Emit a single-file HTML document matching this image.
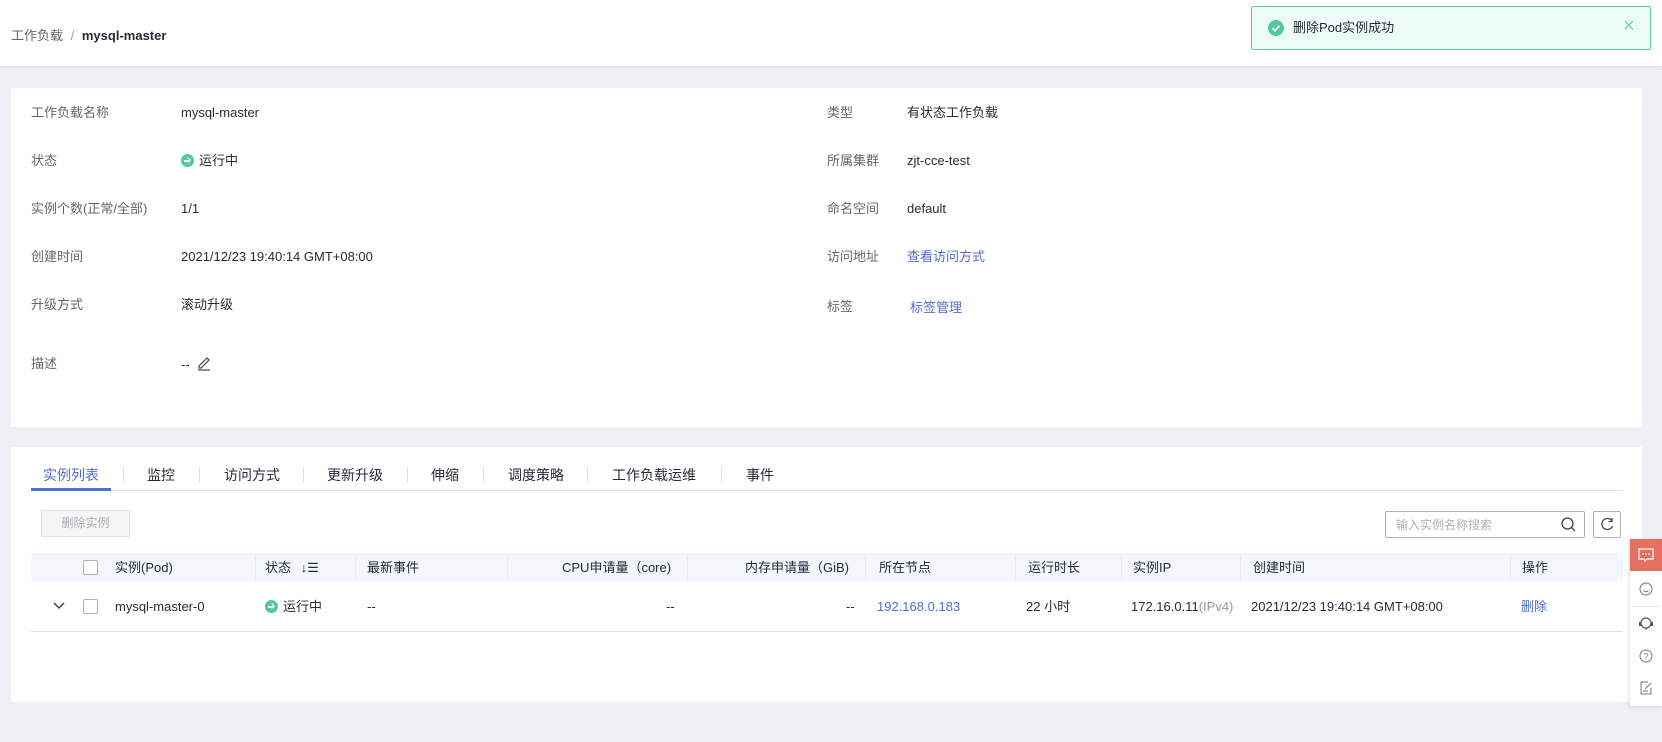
<!DOCTYPE html>
<html><head><meta charset="utf-8"><style>
*{margin:0;padding:0;box-sizing:border-box}
body{width:1662px;height:742px;background:#eef0f5;font-family:"Liberation Sans","Noto Sans CJK SC",sans-serif;font-size:13px;color:#252b3a;position:relative;overflow:hidden}
.a{position:absolute;white-space:nowrap;line-height:18px}
.hdr{position:absolute;left:0;top:0;width:1662px;height:66px;background:#fff;box-shadow:0 2px 4px rgba(0,0,0,.05)}
.card{position:absolute;left:11px;width:1631px;background:#fff}
.lbl{color:#666}
.link{color:#526ecc}
.ok{display:inline-block;width:13px;height:13px;border-radius:50%;background:#50c8a0;vertical-align:-2px;margin-right:5px;position:relative}
.ok:after{content:"";position:absolute;left:3px;top:6px;width:6px;height:1.5px;background:#fff}
.ok:before{content:"";position:absolute;left:5px;top:4px;width:3px;height:3px;border-top:1.5px solid #fff;border-right:1.5px solid #fff;transform:rotate(45deg)}
.sep{position:absolute;top:467px;width:1px;height:16px;background:#dfe1e6}
.th{position:absolute;top:553px;height:29px;background:#f3f6fb;left:31px;width:1592px}
.cs{position:absolute;top:555px;width:1px;height:25px;background:#e8ebf0}
.cb{position:absolute;width:15px;height:15px;border:1px solid #adb0b8;border-radius:2px;background:#fff}
</style></head><body>
<div class="hdr"></div>
<div class="a" style="left:11px;top:27px;color:#666">工作负载 <span style="color:#999;margin:0 4px">/</span> <b style="color:#252b3a">mysql-master</b></div>
<div class="a" style="left:1251px;top:6px;width:400px;height:44px;border:1px solid #5ccba6;background:#edfbf6;border-radius:2px"></div>
<svg class="a" style="left:1268px;top:20px" width="16" height="16" viewBox="0 0 16 16"><circle cx="8" cy="8" r="8" fill="#50c8a0"/><path d="M4.5 8.2 L7 10.7 L11.5 5.8" fill="none" stroke="#fff" stroke-width="1.8"/></svg>
<div class="a" style="left:1293px;top:19px;color:#252b3a">删除Pod实例成功</div>
<div class="a" style="left:1623px;top:17px;color:#7fd1b8;font-size:20px">×</div>

<div class="card" style="top:88px;height:339px"></div>
<div class="a lbl" style="left:31px;top:104px">工作负载名称</div><div class="a" style="left:181px;top:104px">mysql-master</div>
<div class="a lbl" style="left:31px;top:152px">状态</div><div class="a" style="left:181px;top:152px"><span class="ok"></span>运行中</div>
<div class="a lbl" style="left:31px;top:200px">实例个数(正常/全部)</div><div class="a" style="left:181px;top:200px">1/1</div>
<div class="a lbl" style="left:31px;top:248px">创建时间</div><div class="a" style="left:181px;top:248px">2021/12/23 19:40:14 GMT+08:00</div>
<div class="a lbl" style="left:31px;top:296px">升级方式</div><div class="a" style="left:181px;top:296px">滚动升级</div>
<div class="a lbl" style="left:31px;top:355px">描述</div><div class="a" style="left:181px;top:356px">--</div>
<svg class="a" style="left:196px;top:355px" width="16" height="16" viewBox="0 0 16 16"><path d="M3 11 L11 3 L13 5 L5 13 L3 13 Z" fill="none" stroke="#444" stroke-width="1.2"/><path d="M2 15 H14" stroke="#444" stroke-width="1.2"/></svg>
<div class="a lbl" style="left:827px;top:104px">类型</div><div class="a" style="left:907px;top:104px">有状态工作负载</div>
<div class="a lbl" style="left:827px;top:152px">所属集群</div><div class="a" style="left:907px;top:152px">zjt-cce-test</div>
<div class="a lbl" style="left:827px;top:200px">命名空间</div><div class="a" style="left:907px;top:200px">default</div>
<div class="a lbl" style="left:827px;top:248px">访问地址</div><div class="a link" style="left:907px;top:248px">查看访问方式</div>
<div class="a lbl" style="left:827px;top:298px">标签</div><div class="a link" style="left:910px;top:299px">标签管理</div>

<div class="card" style="top:447px;height:255px"></div>
<div class="a" style="left:31px;top:490px;width:1592px;height:1px;background:#dfe1e6"></div>
<div class="a" style="left:31px;top:488px;width:80px;height:3px;background:#526ecc"></div>
<div class="a" style="left:43px;top:466px;font-size:14px;color:#526ecc">实例列表</div>
<div class="sep" style="left:123px"></div>
<div class="a" style="left:147px;top:466px;font-size:14px">监控</div>
<div class="sep" style="left:199px"></div>
<div class="a" style="left:224px;top:466px;font-size:14px">访问方式</div>
<div class="sep" style="left:303px"></div>
<div class="a" style="left:327px;top:466px;font-size:14px">更新升级</div>
<div class="sep" style="left:407px"></div>
<div class="a" style="left:431px;top:466px;font-size:14px">伸缩</div>
<div class="sep" style="left:483px"></div>
<div class="a" style="left:508px;top:466px;font-size:14px">调度策略</div>
<div class="sep" style="left:587px"></div>
<div class="a" style="left:612px;top:466px;font-size:14px">工作负载运维</div>
<div class="sep" style="left:721px"></div>
<div class="a" style="left:746px;top:466px;font-size:14px">事件</div>

<div class="a" style="left:41px;top:510px;width:89px;height:27px;border:1px solid #dfe1e6;background:#f5f5f6;border-radius:2px;color:#adb0b8;font-size:12px;text-align:center;line-height:25px">删除实例</div>
<div class="a" style="left:1385px;top:511px;width:200px;height:27px;border:1px solid #adb0b8;border-radius:2px"></div>
<div class="a" style="left:1396px;top:516px;color:#adb0b8;font-size:12px">输入实例名称搜索</div>
<svg class="a" style="left:1560px;top:516px" width="17" height="17" viewBox="0 0 17 17"><circle cx="7.5" cy="7.5" r="5.5" fill="none" stroke="#444" stroke-width="1.3"/><path d="M11.5 11.5 L15 15" stroke="#444" stroke-width="1.3"/></svg>
<div class="a" style="left:1593px;top:511px;width:28px;height:27px;border:1px solid #adb0b8;border-radius:2px"></div>
<svg class="a" style="left:1599px;top:516px" width="16" height="16" viewBox="0 0 16 16"><path d="M13 5 A5.5 5.5 0 1 0 13.5 10" fill="none" stroke="#444" stroke-width="1.3"/><path d="M13 2 V5.5 H9.5" fill="none" stroke="#444" stroke-width="1.3"/></svg>

<div class="th"></div>
<div class="cs" style="left:255px"></div><div class="cs" style="left:355px"></div><div class="cs" style="left:507px"></div><div class="cs" style="left:687px"></div><div class="cs" style="left:865px"></div><div class="cs" style="left:1015px"></div><div class="cs" style="left:1121px"></div><div class="cs" style="left:1240px"></div><div class="cs" style="left:1510px"></div>
<div class="cb" style="left:83px;top:560px"></div>
<div class="a" style="left:115px;top:559px">实例(Pod)</div>
<div class="a" style="left:265px;top:559px">状态 <span style="margin-left:6px">↓☰</span></div>
<div class="a" style="left:367px;top:559px">最新事件</div>
<div class="a" style="left:562px;top:559px">CPU申请量（core)</div>
<div class="a" style="left:745px;top:559px">内存申请量（GiB)</div>
<div class="a" style="left:879px;top:559px">所在节点</div>
<div class="a" style="left:1028px;top:559px">运行时长</div>
<div class="a" style="left:1133px;top:559px">实例IP</div>
<div class="a" style="left:1253px;top:559px">创建时间</div>
<div class="a" style="left:1522px;top:559px">操作</div>

<svg class="a" style="left:52px;top:601px" width="14" height="10" viewBox="0 0 14 10"><path d="M2 2 L7 7 L12 2" fill="none" stroke="#444" stroke-width="1.5"/></svg>
<div class="cb" style="left:83px;top:599px"></div>
<div class="a" style="left:115px;top:598px">mysql-master-0</div>
<div class="a" style="left:265px;top:598px"><span class="ok"></span>运行中</div>
<div class="a" style="left:367px;top:598px">--</div>
<div class="a" style="left:666px;top:598px">--</div>
<div class="a" style="left:846px;top:598px">--</div>
<div class="a link" style="left:877px;top:598px">192.168.0.183</div>
<div class="a" style="left:1026px;top:598px">22 小时</div>
<div class="a" style="left:1131px;top:598px">172.16.0.11<span style="color:#999">(IPv4)</span></div>
<div class="a" style="left:1251px;top:598px">2021/12/23 19:40:14 GMT+08:00</div>
<div class="a link" style="left:1521px;top:598px">删除</div>
<div class="a" style="left:31px;top:631px;width:1592px;height:1px;background:#dfe1e6"></div>

<div class="a" style="left:1630px;top:539px;width:32px;height:167px;background:#fff;box-shadow:-1px 1px 4px rgba(0,0,0,.12)"></div>
<div class="a" style="left:1630px;top:539px;width:32px;height:32px;background:#e6705f"></div>
<svg class="a" style="left:1637px;top:546px" width="18" height="18" viewBox="0 0 18 18"><path d="M2 3 H16 V13 H10 L8 15 L7 13 H2 Z" fill="none" stroke="#fff" stroke-width="1.2"/><circle cx="6" cy="8" r=".8" fill="#fff"/><circle cx="9" cy="8" r=".8" fill="#fff"/><circle cx="12" cy="8" r=".8" fill="#fff"/></svg>
<svg class="a" style="left:1638px;top:581px" width="16" height="16" viewBox="0 0 16 16"><circle cx="8" cy="8" r="6" fill="none" stroke="#777" stroke-width="1"/><path d="M5.5 9.5 Q8 12 10.5 9.5" fill="none" stroke="#777"/></svg>
<div class="a" style="left:1632px;top:606px;width:28px;height:1px;background:#e5e5e5"></div>
<svg class="a" style="left:1637px;top:614px" width="18" height="18" viewBox="0 0 18 18"><circle cx="9" cy="9" r="5" fill="none" stroke="#555" stroke-width="1.2"/><rect x="2" y="8" width="2.5" height="4" fill="#555"/><rect x="13.5" y="8" width="2.5" height="4" fill="#555"/><path d="M9 14 V16" stroke="#555"/></svg>
<svg class="a" style="left:1638px;top:648px" width="16" height="16" viewBox="0 0 16 16"><circle cx="8" cy="8" r="6" fill="none" stroke="#777" stroke-width="1"/><text x="8" y="11.5" font-size="9" text-anchor="middle" fill="#777" font-family="Liberation Sans">?</text></svg>
<svg class="a" style="left:1638px;top:680px" width="16" height="16" viewBox="0 0 16 16"><path d="M3 2 H10 M3 2 V14 H13 V8" fill="none" stroke="#777"/><path d="M7 9 L13 3" stroke="#777"/><path d="M5 11 H10" stroke="#777"/></svg>
</body></html>
